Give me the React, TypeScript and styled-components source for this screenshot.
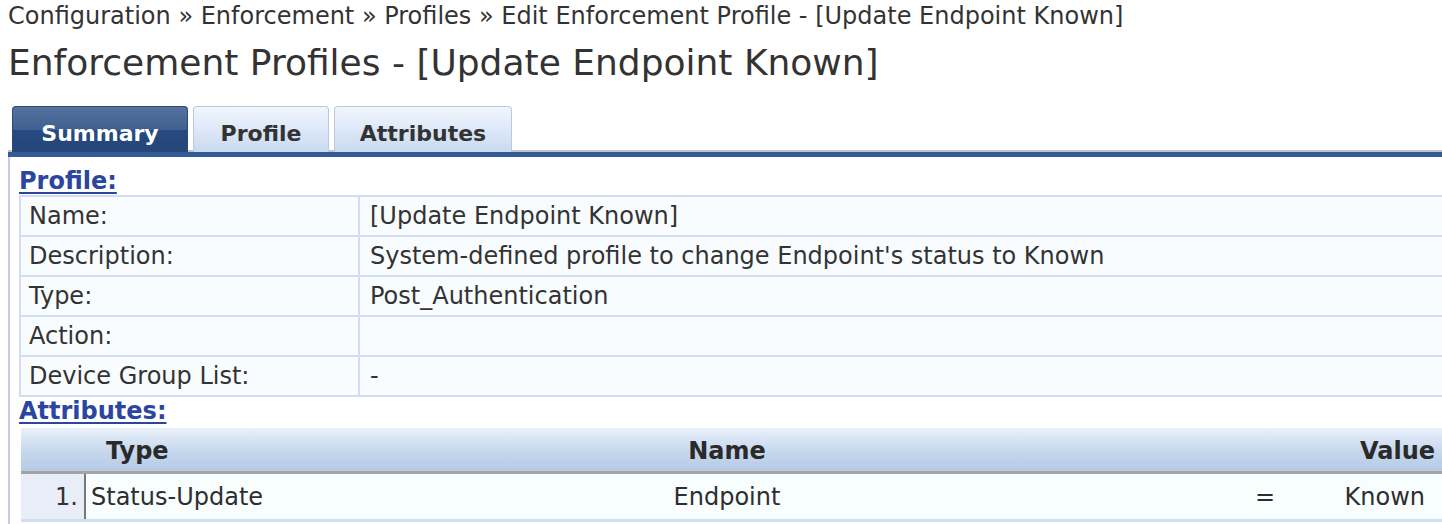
import styled, { createGlobalStyle } from "styled-components";

const GlobalStyle = createGlobalStyle`
  html, body {
    margin: 0;
    padding: 0;
    overflow: hidden;
    background: #ffffff;
  }
  body {
    font-family: "DejaVu Sans", Verdana, sans-serif;
    color: #333;
  }
`;

const profileRows = [
  { label: "Name:", value: "[Update Endpoint Known]" },
  { label: "Description:", value: "System-defined profile to change Endpoint's status to Known" },
  { label: "Type:", value: "Post_Authentication" },
  { label: "Action:", value: "" },
  { label: "Device Group List:", value: "-" },
];

const attributes = [
  { type: "Status-Update", name: "Endpoint", value: "Known" },
];

const tabs = [
  { label: "Summary", width: 176 },
  { label: "Profile", width: 136 },
  { label: "Attributes", width: 178 },
];

const App = () => {
  return (
    <>
      <GlobalStyle />
      <Page>
        <Breadcrumb>
          Configuration » Enforcement » Profiles » Edit Enforcement Profile - [Update Endpoint Known]
        </Breadcrumb>
        <Title>Enforcement Profiles - [Update Endpoint Known]</Title>
        <TabRow>
          {tabs.map((t, i) => (
            <Tab key={t.label} $active={i === 0} $w={t.width}>
              {t.label}
            </Tab>
          ))}
        </TabRow>
        <BlueBar />
        <Panel>
          <SectionLink>Profile:</SectionLink>
          <InfoTable>
            {profileRows.map((r) => (
              <InfoRow key={r.label}>
                <InfoCell $label>{r.label}</InfoCell>
                <InfoCell>{r.value}</InfoCell>
              </InfoRow>
            ))}
          </InfoTable>
          <SectionLink>Attributes:</SectionLink>
          <AttrTable>
            <AttrHead>
              <span />
              <HeadCell>Type</HeadCell>
              <HeadCell $align="center">Name</HeadCell>
              <span />
              <span />
              <HeadCell $align="right">Value</HeadCell>
            </AttrHead>
            {attributes.map((a, i) => (
              <AttrRow key={a.type}>
                <NumCell>{i + 1}.</NumCell>
                <AttrCell>{a.type}</AttrCell>
                <AttrCell $align="center">{a.name}</AttrCell>
                <span />
                <AttrCell $align="center">=</AttrCell>
                <AttrCell $align="right">{a.value}</AttrCell>
              </AttrRow>
            ))}
          </AttrTable>
        </Panel>
      </Page>
    </>
  );
};

export default App;

const Page = styled.div`
  width: 1460px;
  height: 524px;
  overflow: hidden;
  padding-left: 8px;
`;

const Breadcrumb = styled.div`
  font-size: 24px;
  line-height: 32px;
  white-space: nowrap;
`;

const Title = styled.h1`
  margin: 6px 0 0;
  font-size: 36px;
  font-weight: normal;
  line-height: 50px;
  white-space: nowrap;
  height: 68px;
`;

const TabRow = styled.div`
  display: flex;
  align-items: flex-end;
  gap: 5px;
  padding-left: 4px;
  height: 44px;
  border-bottom: 2px solid #c2c2c2;
`;

const Tab = styled.div<{ $active?: boolean; $w: number }>`
  width: ${(p) => p.$w}px;
  height: 46px;
  margin-bottom: -2px;
  box-sizing: border-box;
  display: flex;
  align-items: center;
  justify-content: center;
  padding-top: 8px;
  font-size: 22px;
  font-weight: bold;
  border-radius: 4px 4px 0 0;
  color: ${(p) => (p.$active ? "#ffffff" : "#333")};
  border: 1px solid ${(p) => (p.$active ? "#2a4a7e" : "#bcc8e0")};
  border-bottom: none;
  background: ${(p) =>
    p.$active
      ? "linear-gradient(#56729e 0%, #3f6090 50%, #274a80 52%, #244679 100%)"
      : "linear-gradient(#f2f6fd 0%, #dde8f8 50%, #c9daf0 100%)"};
`;

const BlueBar = styled.div`
  height: 5px;
  background: #335b95;
`;

const Panel = styled.div`
  border-left: 2px solid #c4cce6;
  padding-left: 9px;
  padding-top: 10px;
  height: 400px;
`;

const SectionLink = styled.div`
  font-size: 24px;
  font-weight: bold;
  color: #2a46a0;
  text-decoration: underline;
  text-underline-offset: 3px;
  line-height: 28px;
`;

const InfoTable = styled.div`
  border-top: 2px solid #d2ddf5;
  border-left: 2px solid #d2ddf5;
`;

const InfoRow = styled.div`
  display: grid;
  grid-template-columns: 339px 1fr;
  height: 40px;
  box-sizing: border-box;
  border-bottom: 2px solid #d2ddf5;
  background: #f8fcfe;
`;

const InfoCell = styled.div<{ $label?: boolean }>`
  display: flex;
  align-items: center;
  padding-left: ${(p) => (p.$label ? "8px" : "10px")};
  font-size: 24px;
  color: #333;
  white-space: nowrap;
  border-right: ${(p) => (p.$label ? "2px solid #d2ddf5" : "none")};
`;

const AttrTable = styled.div`
  margin-top: 3px;
  margin-left: 2px;
  width: 1421px;
`;

const cols = "65px 454px 374px 1fr 130px 112px";

const AttrHead = styled.div`
  display: grid;
  grid-template-columns: ${cols};
  height: 43px;
  background: linear-gradient(#eaf1fb 0%, #c9d9ee 50%, #b5cae5 100%);
  border-bottom: 3px solid #a4a4a4;
`;

const HeadCell = styled.div<{ $align?: string }>`
  display: flex;
  align-items: flex-end;
  padding-bottom: 6px;
  justify-content: ${(p) =>
    p.$align === "center" ? "center" : p.$align === "right" ? "flex-end" : "flex-start"};
  padding-left: ${(p) => (p.$align ? "0" : "20px")};
  padding-right: ${(p) => (p.$align === "right" ? "7px" : "0")};
  font-size: 24px;
  font-weight: bold;
  color: #2a2a2a;
`;

const AttrRow = styled.div`
  display: grid;
  grid-template-columns: ${cols};
  height: 45px;
  background: #f8fdfe;
  border-bottom: 3px solid #d2ddf5;
`;

const NumCell = styled.div`
  display: flex;
  align-items: center;
  justify-content: flex-end;
  padding-right: 6px;
  font-size: 24px;
  background: #e9edf7;
  border-right: 2px solid #777;
`;

const AttrCell = styled.div<{ $align?: string }>`
  display: flex;
  align-items: center;
  justify-content: ${(p) =>
    p.$align === "center" ? "center" : p.$align === "right" ? "flex-end" : "flex-start"};
  padding-left: ${(p) => (p.$align ? "0" : "5px")};
  padding-right: ${(p) => (p.$align === "right" ? "17px" : "0")};
  font-size: 24px;
  color: #2e2e2e;
  white-space: nowrap;
`;
